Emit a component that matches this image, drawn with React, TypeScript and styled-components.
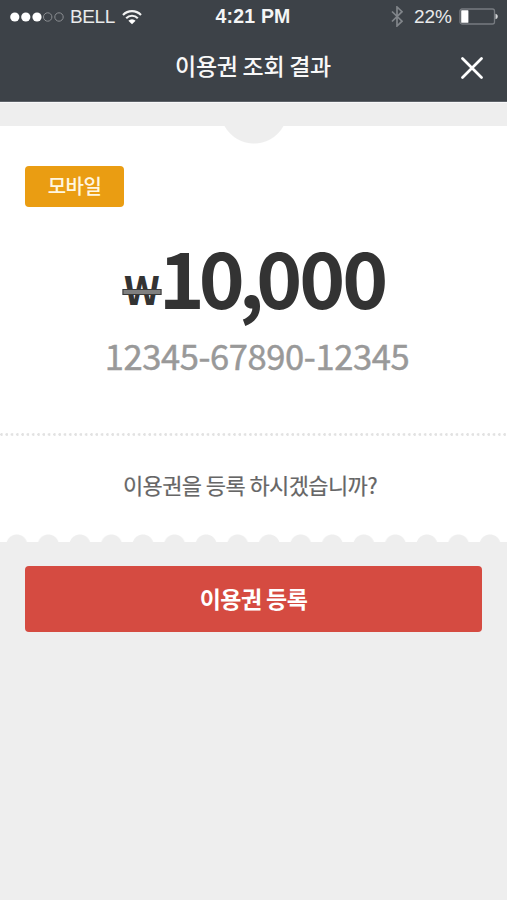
import React from "react";
import styled, { createGlobalStyle } from "styled-components";

const GlobalStyle = createGlobalStyle`
  * { box-sizing: border-box; }
  body { margin: 0; background: #eeeeee; font-family: "Noto Sans CJK KR", sans-serif; }
`;

const Screen = styled.div`
  width: 507px;
  height: 900px;
  overflow: hidden;
  background: #eeeeee;
  display: flex;
  flex-direction: column;
`;

const TopArea = styled.header`
  height: 102px;
  flex: none;
  background: #3d4248;
  border-bottom: 1px solid #5d6268;
  box-shadow: 0 1px 0 #f8f8f9;
  color: #fff;
`;

const StatusBar = styled.div`
  height: 33px;
  padding: 0 9px 0 10px;
  display: grid;
  grid-template-columns: 1fr auto 1fr;
  align-items: center;
  font: 19px/33px "Liberation Sans", sans-serif;
`;

const StatusGroup = styled.div<{ $end?: boolean }>`
  display: flex;
  align-items: center;
  justify-content: ${(p) => (p.$end ? "flex-end" : "flex-start")};
`;

const StatusText = styled.span<{ $left?: number; $spacing?: number }>`
  color: #e9eaeb;
  margin-left: ${(p) => p.$left ?? 0}px;
  letter-spacing: ${(p) => p.$spacing ?? 0}px;
  white-space: nowrap;
`;

const Clock = styled.span`
  color: #f4f5f5;
  font-size: 19.5px;
  font-weight: 700;
  letter-spacing: 0.2px;
  margin-right: 2px;
`;

const Icon = styled.svg<{ $left?: number }>`
  display: block;
  flex: none;
  margin-left: ${(p) => p.$left ?? 0}px;
`;

const TitleBar = styled.div`
  height: 69px;
  padding: 0 24px 0 46px;
  display: grid;
  grid-template-columns: 1fr 22px;
  align-items: center;
`;

const Title = styled.h1`
  margin: 0;
  padding: 0 1px 5px 0;
  text-align: center;
  font-size: 23px;
  line-height: 32px;
  font-weight: 500;
  letter-spacing: -0.3px;
  color: #f8f8f8;
`;

const CloseButton = styled.button`
  width: 22px;
  height: 22px;
  padding: 0;
  border: 0;
  background: none;
`;

const Ticket = styled.main`
  height: 416px;
  flex: none;
  margin-top: 24px;
  background: #fff;
  display: flex;
  flex-direction: column;
`;

const Notch = styled.div`
  width: 64px;
  height: 18px;
  align-self: center;
  background: radial-gradient(circle at 50% -16px, #eeeeee 33px, transparent 34px);
`;

const Tag = styled.span`
  width: 99px;
  height: 41px;
  margin: 22px 0 0 25px;
  border-radius: 4px;
  background: #ea9d12;
  color: #fff6e0;
  font-size: 20px;
  font-weight: 500;
  line-height: 39px;
  text-align: center;
  letter-spacing: -0.5px;
`;

const Amount = styled.div`
  height: 84px;
  margin-top: 26px;
  padding-right: 1px;
  display: flex;
  justify-content: center;
  align-items: baseline;
  color: #333;
  font-weight: 700;
  line-height: 84px;
`;

const Won = styled.span`
  position: relative;
  width: 39px;
  margin-right: -1px;
  transform: translate(1.5px, -4px);
  text-align: center;
  font-size: 39px;
  line-height: 40px;

  &::after {
    content: "";
    position: absolute;
    left: 0;
    right: 0;
    bottom: 13px;
    height: 4px;
    border: 1px solid #3a3a3a;
    background: #808080;
  }
`;

const Digits = styled.span<{ $spacing: number }>`
  font-size: 78px;
  letter-spacing: ${(p) => p.$spacing}px;
`;

const Code = styled.div`
  height: 52px;
  margin-top: 12px;
  padding-left: 7px;
  text-align: center;
  color: #999;
  font-size: 34.5px;
  line-height: 52px;
  letter-spacing: -0.4px;
  -webkit-text-stroke: 0.5px #999;
`;

const Perforation = styled.div`
  height: 3px;
  flex: none;
  margin-top: auto;
  background: radial-gradient(circle at 1.5px 1.5px, #e2e2e2 1.1px, transparent 1.6px) 0 0 / 5.3px 3px repeat-x;
`;

const Question = styled.p`
  height: 106px;
  flex: none;
  margin: 0;
  padding: 32px 7px 0 0;
  text-align: center;
  color: #666;
  font-size: 22px;
  line-height: 32px;
  letter-spacing: -0.6px;
  -webkit-text-stroke: 0.2px #666;
`;

const Scallops = styled.div`
  height: 8px;
  flex: none;
  margin-top: -8px;
  background: radial-gradient(circle at 16.8px 11px, #eeeeee 10px, transparent 11px) 0 0 / 31.55px 8px repeat-x;
`;

const RegisterButton = styled.button`
  height: 66px;
  flex: none;
  margin: 24px 25px 0;
  padding: 0 0 3px;
  border: 0;
  border-radius: 4px;
  background: #d54b41;
  color: #fff;
  font: 700 23px/32px "Noto Sans CJK KR", sans-serif;
  letter-spacing: -0.6px;
`;

const SignalDots = () => (
  <Icon width="54" height="12" viewBox="0 0 54 12">
    {[4.8, 15.8, 27].map((x) => (
      <circle key={x} cx={x} cy="6" r="4.6" fill="#fff" />
    ))}
    {[37.7, 49].map((x) => (
      <circle key={x} cx={x} cy="6" r="4.2" fill="none" stroke="#8b8e92" strokeWidth="1" />
    ))}
  </Icon>
);

const Wifi = () => (
  <Icon $left={7} width="20" height="16" viewBox="0 0 20 16">
    <g fill="none" stroke="#f2f2f2" strokeWidth="2.1">
      <path d="M1 6a12.4 12.4 0 0 1 18 0" />
      <path d="M4.2 9.2a8 8 0 0 1 11.6 0" />
    </g>
    <path d="M10 15.3 6.4 11.7a5 5 0 0 1 7.2 0Z" fill="#fff" />
  </Icon>
);

const Bluetooth = () => (
  <Icon width="12" height="21" viewBox="0 0 12 21">
    <path d="M1 5.5 11 15.2 6 20V1l5 4.7L1 15.5" fill="none" stroke="#81858a" strokeWidth="1.7" />
  </Icon>
);

const Battery = () => (
  <Icon $left={7} width="39" height="17" viewBox="0 0 39 17">
    <rect x="1" y="1" width="34.5" height="15" rx="2" fill="none" stroke="#777b80" strokeWidth="1.3" />
    <rect x="2.2" y="2.2" width="7.2" height="12.6" rx=".6" fill="#fff" />
    <path d="M36.5 5.8c3 .8 3 4.6 0 5.4Z" fill="#d5d6d8" />
  </Icon>
);

export default function App() {
  return (
    <>
      <GlobalStyle />
      <Screen>
        <TopArea>
          <StatusBar>
            <StatusGroup>
              <SignalDots />
              <StatusText $left={6} $spacing={-0.4}>BELL</StatusText>
              <Wifi />
            </StatusGroup>
            <Clock>4:21 PM</Clock>
            <StatusGroup $end>
              <Bluetooth />
              <StatusText $left={11}>22%</StatusText>
              <Battery />
            </StatusGroup>
          </StatusBar>
          <TitleBar>
            <Title>이용권 조회 결과</Title>
            <CloseButton aria-label="닫기">
              <Icon width="22" height="22" viewBox="0 0 22 22">
                <path d="M1.5 1.5 20.5 20.5M20.5 1.5 1.5 20.5" stroke="#fff" strokeWidth="2.7" strokeLinecap="round" />
              </Icon>
            </CloseButton>
          </TitleBar>
        </TopArea>
        <Ticket>
          <Notch />
          <Tag>모바일</Tag>
          <Amount>
            <Won aria-label="₩">W</Won>
            <Digits $spacing={-6}>10</Digits>
            <Digits $spacing={-8}>,</Digits>
            <Digits $spacing={-3}>000</Digits>
          </Amount>
          <Code>12345-67890-12345</Code>
          <Perforation />
          <Question>이용권을 등록 하시겠습니까?</Question>
          <Scallops />
        </Ticket>
        <RegisterButton>이용권 등록</RegisterButton>
      </Screen>
    </>
  );
}
